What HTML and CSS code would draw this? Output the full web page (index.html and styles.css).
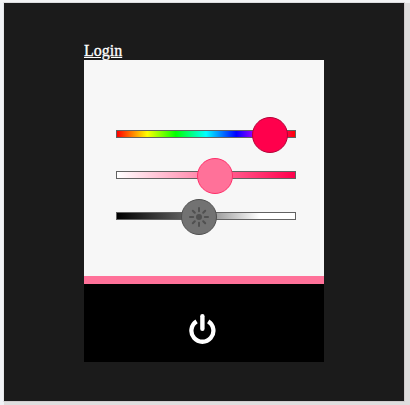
FILE: index.html
```html
<!DOCTYPE html>
<html lang="en">
<head>
<meta charset="utf-8">
<title>Login</title>
<link rel="stylesheet" href="styles.css">
</head>
<body>
<div class="frame">
  <main class="stage">
    <a class="login" href="#">Login</a>
    <section class="panel">
      <div class="slider hue"><span class="knob"></span></div>
      <div class="slider saturation"><span class="knob"></span></div>
      <div class="slider brightness"><span class="knob">
        <svg width="34" height="34" viewBox="-17 -17 34 34">
          <circle r="3" fill="#505050"/>
          <path d="M0-5.8V-9M0 5.8V9M-5.8 0H-9M5.8 0H9M-4.2-4.2L-6.2-6.2M4.2-4.2L6.2-6.2M-4.2 4.2L-6.2 6.2M4.2 4.2L6.2 6.2" stroke="#505050" stroke-width="2" stroke-linecap="round"/>
        </svg>
      </span></div>
    </section>
    <footer class="power">
      <svg width="28" height="32" viewBox="0 0 28 32" fill="none" stroke="#fff">
        <path d="M8.6 8.4A11 11 0 1 0 20.2 8.4" stroke-width="4.3"/>
        <path d="M14.4 3.2V15.8" stroke-width="4.4" stroke-linecap="round"/>
      </svg>
    </footer>
  </main>
</div>
</body>
</html>
```
FILE: styles.css
```css
* { box-sizing: border-box; }
body { margin: 0; background: #dfdede; font-family: "Liberation Serif", serif; }
.frame {
  width: 410px;
  height: 405px;
  overflow: hidden;
  padding-top: 2px;
  padding-left: 3px;
  background:
    linear-gradient(#f3f4f5, #f3f4f5) 0 0 / 100% 3px no-repeat,
    linear-gradient(#f1f3f6, #f1f3f6) 0 0 / 4px 100% no-repeat,
    #dfdede;
}
.stage {
  width: 402px;
  height: 400px;
  padding: 38px 80px 0;
  border: 1px solid #d0cccd;
  border-left-color: #e5e7e9;
  border-top-color: #dcdddf;
  background: #1b1b1b;
}
.login {
  display: block;
  height: 19px;
  line-height: 19px;
  font-size: 16px;
  color: #fff;
  -webkit-text-stroke: 0.3px #fff;
}
.panel {
  display: flex;
  flex-direction: column;
  gap: 33px;
  height: 224px;
  padding: 70px 28px 0 32px;
  border-bottom: 8px solid #ff7199;
  background: #f7f7f7;
}
.slider { position: relative; width: 180px; height: 8px; border: 1px solid #626262; }
.hue { background: linear-gradient(90deg, #f00, #ff0 17%, #0f0 33%, #0ff 50%, #00f 67%, #f0f 83%, #f00); }
.saturation { background: linear-gradient(90deg, #fff, #ff004c); }
.brightness { background: linear-gradient(90deg, #000, #727272 45%, #fff 80%); }
.knob {
  position: absolute;
  top: -14px;
  width: 36px;
  height: 36px;
  border: 1px solid;
  border-radius: 50%;
}
.hue .knob { left: 135px; background: #ff004c; border-color: #b40036; }
.saturation .knob { left: 80px; background: #ff7199; border-color: #ff2e69; }
.brightness .knob { left: 64px; background: #727272; border-color: #505050; }
.knob svg, .power svg { display: block; }
.power { height: 78px; padding: 29px 0 0 104px; background: #000; }
```
